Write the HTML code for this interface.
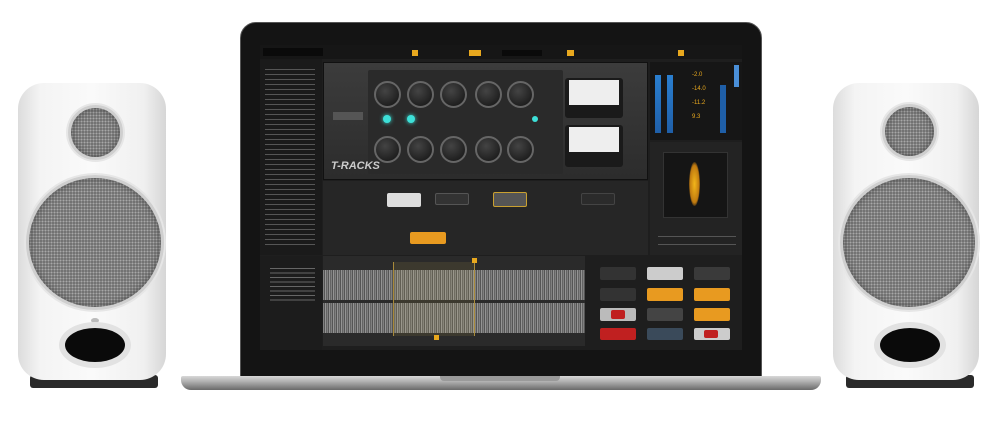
<!DOCTYPE html>
<html><head><style>
*{margin:0;padding:0;box-sizing:border-box}
body{width:997px;height:440px;background:#fff;position:relative;overflow:hidden;font-family:"Liberation Sans",sans-serif}
.a{position:absolute}
.spk{border-radius:26px;background:linear-gradient(90deg,#dcdcdc 0%,#f4f4f4 15%,#fafafa 50%,#f0f0f0 85%,#d6d6d6 100%)}
.grill{border-radius:50%;background:radial-gradient(circle,#a8a8a8 0 1px,#666 1.3px) 0 0/3px 3px;border:3px solid #cfcfcf;box-shadow:0 0 0 2px #e6e6e6,inset 0 0 8px rgba(0,0,0,.35)}
.port{border-radius:50%;background:#0a0a0a;box-shadow:0 0 0 6px #e2e2e2}
.knob{border-radius:50%;background:radial-gradient(circle at 40% 35%,#444,#111);border:2px solid #666;width:27px;height:27px}
.mod{border-radius:2px}
</style></head><body>

<!-- left speaker -->
<div class="a" style="left:30px;top:375px;width:128px;height:13px;background:#2a2a2a;border-radius:3px"></div>
<div class="a spk" style="left:18px;top:83px;width:148px;height:297px"></div>
<div class="a grill" style="left:68px;top:105px;width:55px;height:55px"></div>
<div class="a grill" style="left:26px;top:175px;width:138px;height:135px"></div>
<div class="a" style="left:91px;top:318px;width:8px;height:5px;border-radius:50%;background:#bbb"></div>
<div class="a port" style="left:65px;top:328px;width:60px;height:34px"></div>

<!-- right speaker -->
<div class="a" style="left:846px;top:375px;width:128px;height:13px;background:#2a2a2a;border-radius:3px"></div>
<div class="a spk" style="left:833px;top:83px;width:146px;height:297px"></div>
<div class="a grill" style="left:882px;top:104px;width:55px;height:55px"></div>
<div class="a grill" style="left:840px;top:175px;width:138px;height:135px"></div>
<div class="a port" style="left:880px;top:328px;width:60px;height:34px"></div>

<!-- laptop -->
<div class="a" style="left:240px;top:22px;width:522px;height:356px;background:#141414;border-radius:16px 16px 0 0;border:1px solid #555"></div>
<div class="a" style="left:181px;top:376px;width:640px;height:14px;background:linear-gradient(#d8d8d8,#b0b0b0 40%,#6a6a6a);border-radius:2px 2px 10px 10px"></div>
<div class="a" style="left:440px;top:376px;width:120px;height:5px;background:#9a9a9a;border-radius:0 0 4px 4px"></div>

<!-- screen -->
<div class="a" style="left:260px;top:45px;width:482px;height:305px;background:#1e1e1e"></div>
<div class="a" style="left:260px;top:45px;width:482px;height:14px;background:#161616"></div>
<div class="a" style="left:263px;top:48px;width:60px;height:8px;background:#0a0a0a"></div>
<div class="a" style="left:412px;top:50px;width:6px;height:6px;background:#e8a81e"></div>
<div class="a" style="left:469px;top:50px;width:12px;height:6px;background:#e8a81e"></div>
<div class="a" style="left:567px;top:50px;width:7px;height:6px;background:#e8a81e"></div>
<div class="a" style="left:678px;top:50px;width:6px;height:6px;background:#e8a81e"></div>
<div class="a" style="left:502px;top:50px;width:40px;height:6px;background:#0a0a0a"></div>
<!-- browser list -->
<div class="a" style="left:260px;top:59px;width:62px;height:196px;background:#1a1a1a"></div>
<div class="a" style="left:265px;top:66px;width:50px;height:180px;background:repeating-linear-gradient(#1a1a1a 0 3px,#555 3px 4px,#1a1a1a 4px 5px)"></div>
<!-- plugin -->
<div class="a" style="left:323px;top:62px;width:325px;height:118px;background:linear-gradient(#3c3c3c,#2c2c2c);border:1px solid #111"></div>
<div class="a" style="left:368px;top:70px;width:195px;height:104px;background:#2a2a2a;border-radius:2px"></div>
<div class="a knob" style="left:374px;top:81px"></div>
<div class="a knob" style="left:407px;top:81px"></div>
<div class="a knob" style="left:440px;top:81px"></div>
<div class="a knob" style="left:475px;top:81px"></div>
<div class="a knob" style="left:507px;top:81px"></div>
<div class="a knob" style="left:374px;top:136px"></div>
<div class="a knob" style="left:407px;top:136px"></div>
<div class="a knob" style="left:440px;top:136px"></div>
<div class="a knob" style="left:475px;top:136px"></div>
<div class="a knob" style="left:507px;top:136px"></div>
<div class="a" style="left:383px;top:115px;width:8px;height:8px;border-radius:50%;background:#3de0d8;box-shadow:0 0 4px #3de0d8"></div>
<div class="a" style="left:407px;top:115px;width:8px;height:8px;border-radius:50%;background:#3de0d8;box-shadow:0 0 4px #3de0d8"></div>
<div class="a" style="left:532px;top:116px;width:6px;height:6px;border-radius:50%;background:#3de0d8"></div>
<div class="a" style="left:333px;top:112px;width:30px;height:8px;background:#555"></div>
<div class="a" style="left:331px;top:160px;color:#ccc;font-size:11px;font-style:italic;font-weight:bold">T-RACKS</div>
<div class="a" style="left:565px;top:78px;width:58px;height:40px;background:#1a1a1a;border-radius:3px"></div>
<div class="a" style="left:569px;top:80px;width:50px;height:25px;background:#eee"></div>
<div class="a" style="left:565px;top:125px;width:58px;height:42px;background:#1a1a1a;border-radius:3px"></div>
<div class="a" style="left:569px;top:127px;width:50px;height:25px;background:#eee"></div>
<!-- meters -->
<div class="a" style="left:650px;top:62px;width:92px;height:78px;background:#161616"></div>
<div class="a" style="left:655px;top:75px;width:6px;height:58px;background:linear-gradient(#2a7fd0,#1f5fa8)"></div>
<div class="a" style="left:667px;top:75px;width:6px;height:58px;background:linear-gradient(#2a7fd0,#1f5fa8)"></div>
<div class="a" style="left:720px;top:85px;width:6px;height:48px;background:#1f5fa8"></div>
<div class="a" style="left:734px;top:65px;width:5px;height:22px;background:#4a8fd8"></div>
<div class="a" style="left:692px;top:68px;color:#e8a81e;font-size:6px;line-height:14px">-2.0<br>-14.0<br>-11.2<br>9.3</div>
<!-- right panel -->
<div class="a" style="left:650px;top:142px;width:92px;height:113px;background:#232323"></div>
<div class="a" style="left:663px;top:152px;width:65px;height:66px;background:#151515;border:1px solid #333"></div>
<div class="a" style="left:689px;top:162px;width:11px;height:44px;border-radius:50%;background:radial-gradient(#f2b51a,#c07a10 60%,transparent 75%)"></div>
<div class="a" style="left:658px;top:236px;width:78px;height:1px;background:#555"></div>
<div class="a" style="left:658px;top:244px;width:78px;height:1px;background:#555"></div>
<!-- chain -->
<div class="a" style="left:323px;top:181px;width:325px;height:74px;background:#262626"></div>
<div class="a mod" style="left:387px;top:193px;width:34px;height:14px;background:#ddd"></div>
<div class="a mod" style="left:435px;top:193px;width:34px;height:12px;background:#333;border:1px solid #555"></div>
<div class="a mod" style="left:493px;top:192px;width:34px;height:15px;background:#555;border:1px solid #c9a030"></div>
<div class="a mod" style="left:581px;top:193px;width:34px;height:12px;background:#2b2b2b;border:1px solid #444"></div>
<div class="a mod" style="left:410px;top:232px;width:36px;height:12px;background:#e89a20"></div>
<!-- bottom left list -->
<div class="a" style="left:260px;top:256px;width:62px;height:94px;background:#1c1c1c"></div>
<div class="a" style="left:270px;top:266px;width:45px;height:36px;background:repeating-linear-gradient(#1c1c1c 0 2px,#666 2px 3px,#1c1c1c 3px 4.5px)"></div>
<!-- waveform -->
<div class="a" style="left:323px;top:256px;width:262px;height:90px;background:#2a2a2a"></div>
<div class="a" style="left:323px;top:270px;width:262px;height:30px;background:repeating-linear-gradient(90deg,#8a8a8a 0 1px,#5a5a5a 1px 2px,#a0a0a0 2px 3px,#6a6a6a 3px 4px);opacity:.9"></div>
<div class="a" style="left:323px;top:303px;width:262px;height:30px;background:repeating-linear-gradient(90deg,#8a8a8a 0 1px,#5a5a5a 1px 2px,#a0a0a0 2px 3px,#6a6a6a 3px 4px);opacity:.9"></div>
<div class="a" style="left:393px;top:262px;width:82px;height:74px;background:rgba(200,170,80,.12);border-left:1px solid #a88a3a;border-right:1px solid #a88a3a"></div>
<div class="a" style="left:472px;top:258px;width:5px;height:5px;background:#e8a81e"></div>
<div class="a" style="left:434px;top:335px;width:5px;height:5px;background:#e8a81e"></div>
<!-- modules -->
<div class="a" style="left:586px;top:256px;width:156px;height:94px;background:#1e1e1e"></div>
<div class="a mod" style="left:600px;top:267px;width:36px;height:13px;background:#333"></div>
<div class="a mod" style="left:647px;top:267px;width:36px;height:13px;background:#ccc"></div>
<div class="a mod" style="left:694px;top:267px;width:36px;height:13px;background:#3a3a3a"></div>
<div class="a mod" style="left:600px;top:288px;width:36px;height:13px;background:#333"></div>
<div class="a mod" style="left:647px;top:288px;width:36px;height:13px;background:#e89a20"></div>
<div class="a mod" style="left:694px;top:288px;width:36px;height:13px;background:#e89a20"></div>
<div class="a mod" style="left:600px;top:308px;width:36px;height:13px;background:#bbb"></div>
<div class="a mod" style="left:611px;top:310px;width:14px;height:9px;background:#c02020"></div>
<div class="a mod" style="left:647px;top:308px;width:36px;height:13px;background:#444"></div>
<div class="a mod" style="left:694px;top:308px;width:36px;height:13px;background:#e89a20"></div>
<div class="a mod" style="left:600px;top:328px;width:36px;height:12px;background:#c02020"></div>
<div class="a mod" style="left:647px;top:328px;width:36px;height:12px;background:#3a4a5a"></div>
<div class="a mod" style="left:694px;top:328px;width:36px;height:12px;background:#ccc"></div>
<div class="a mod" style="left:704px;top:330px;width:14px;height:8px;background:#c02020"></div>
</body></html>
